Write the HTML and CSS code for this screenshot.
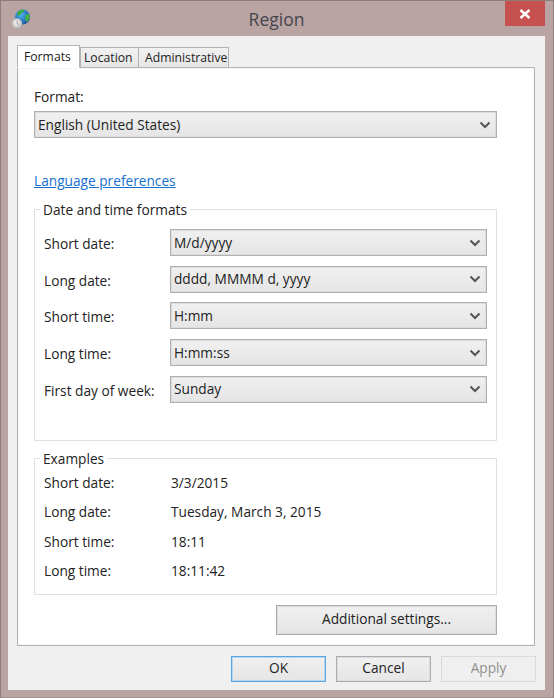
FILE: index.html
```html
<!DOCTYPE html>
<html lang="en">
<head>
  <meta charset="UTF-8">
  <title>Region</title>
  <link rel="stylesheet" href="styles.css">
</head>
<body>
  <div class="window">
    <div class="titlebar">
      <svg class="app-icon" width="20" height="20" viewBox="0 0 20 20">
        <defs>
          <radialGradient id="sea" cx="0.4" cy="0.35" r="0.75">
            <stop offset="0" stop-color="#4fb4ee"/>
            <stop offset="1" stop-color="#0f4a98"/>
          </radialGradient>
          <radialGradient id="disc" cx="0.45" cy="0.4" r="0.7">
            <stop offset="0" stop-color="#f6f6f6"/>
            <stop offset="1" stop-color="#b4b4b4"/>
          </radialGradient>
        </defs>
        <circle cx="11.5" cy="8" r="7.5" fill="url(#sea)"/>
        <path d="M8 2c1.500-1.200 3.500-1.500 5-1l-.5 2-2.500 1-.5 2-2 .5-1.500-1.500z" fill="#3fae3a"/>
        <path d="M14.500 6l3.500-1c1 2.500.5 4.500-.8 6.500l-2 1.500-.8-2.500z" fill="#46b23e"/>
        <circle cx="6" cy="14.500" r="5" fill="url(#disc)" stroke="#a8a8a8" stroke-width="0.5"/>
        <path d="M6 11.500v3l2 1" fill="none" stroke="#8a8a8a" stroke-width="0.8"/>
      </svg>
      <div class="title">Region</div>
      <div class="close">
        <svg width="12" height="10" viewBox="0 0 12 10">
          <path d="M1.500 1l9 8M10.500 1l-9 8" stroke="#fff" stroke-width="2.400" fill="none"/>
        </svg>
      </div>
    </div>

    <div class="client">
      <div class="tabs">
        <div class="tab active">Formats</div>
        <div class="tab tab-location">Location</div>
        <div class="tab tab-admin">Administrative</div>
      </div>

      <div class="pane">
        <label class="format-label">Format:</label>
        <div class="combo">
          <span>English (United States)</span>
          <svg class="chevron" width="12" height="8" viewBox="0 0 12 8"><path d="M1.500 1.500L6 6l4.500-4.500" fill="none" stroke="#555" stroke-width="2"/></svg>
        </div>

        <a class="link" href="#">Language preferences</a>

        <fieldset class="group formats-group">
          <legend>Date and time formats</legend>
          <div class="form-row">
            <label>Short date:</label>
            <div class="combo">
              <span>M/d/yyyy</span>
              <svg class="chevron" width="12" height="8" viewBox="0 0 12 8"><path d="M1.500 1.500L6 6l4.500-4.500" fill="none" stroke="#555" stroke-width="2"/></svg>
            </div>
          </div>
          <div class="form-row">
            <label>Long date:</label>
            <div class="combo">
              <span>dddd, MMMM d, yyyy</span>
              <svg class="chevron" width="12" height="8" viewBox="0 0 12 8"><path d="M1.500 1.500L6 6l4.500-4.500" fill="none" stroke="#555" stroke-width="2"/></svg>
            </div>
          </div>
          <div class="form-row">
            <label>Short time:</label>
            <div class="combo">
              <span>H:mm</span>
              <svg class="chevron" width="12" height="8" viewBox="0 0 12 8"><path d="M1.500 1.500L6 6l4.500-4.500" fill="none" stroke="#555" stroke-width="2"/></svg>
            </div>
          </div>
          <div class="form-row">
            <label>Long time:</label>
            <div class="combo">
              <span>H:mm:ss</span>
              <svg class="chevron" width="12" height="8" viewBox="0 0 12 8"><path d="M1.500 1.500L6 6l4.500-4.500" fill="none" stroke="#555" stroke-width="2"/></svg>
            </div>
          </div>
          <div class="form-row">
            <label>First day of week:</label>
            <div class="combo">
              <span>Sunday</span>
              <svg class="chevron" width="12" height="8" viewBox="0 0 12 8"><path d="M1.500 1.500L6 6l4.500-4.500" fill="none" stroke="#555" stroke-width="2"/></svg>
            </div>
          </div>
        </fieldset>

        <fieldset class="group examples-group">
          <legend>Examples</legend>
          <div class="example-row"><span>Short date:</span><span>3/3/2015</span></div>
          <div class="example-row"><span>Long date:</span><span>Tuesday, March 3, 2015</span></div>
          <div class="example-row"><span>Short time:</span><span>18:11</span></div>
          <div class="example-row"><span>Long time:</span><span>18:11:42</span></div>
        </fieldset>

        <div class="additional-row">
          <button class="btn additional-btn" type="button">Additional settings...</button>
        </div>
      </div>

      <div class="footer">
        <button class="btn default" type="button">OK</button>
        <button class="btn" type="button">Cancel</button>
        <button class="btn disabled" type="button">Apply</button>
      </div>
    </div>
  </div>
</body>
</html>
```

FILE: styles.css
```css
/* Base styles */
* {
  box-sizing: border-box;
}

body {
  margin: 0;
  font-family: "Open Sans", "Noto Sans", sans-serif;
  font-size: 13.7px;
  line-height: 20px;
  color: #222;
  background: #b9a4a3;
}

/* Window frame */
.window {
  width: 554px;
  height: 698px;
  padding: 0 8px 8px 7px;
  background: #b9a4a3;
  border: 1px solid #8e7c7c;
  border-bottom-color: #a08d8d;
  display: flex;
  flex-direction: column;
}

.titlebar {
  height: 35px;
  flex: none;
  display: grid;
  grid-template-columns: 1fr auto 1fr;
  align-items: start;
}

.app-icon {
  margin: 8px 0 0 3px;
}

.title {
  margin-top: 6px;
  font-size: 17.5px;
  line-height: 24px;
  color: #45454d;
}

.close {
  justify-self: end;
  width: 40px;
  height: 25px;
  background: #c75050;
  display: flex;
  align-items: center;
  justify-content: center;
}

.client {
  flex: 1;
  background: #f0f0f0;
  padding: 9px 10px 8px 9px;
  display: flex;
  flex-direction: column;
}

/* Tabs */
.tabs {
  display: flex;
  align-items: flex-end;
  height: 23px;
  margin-bottom: -1px;
  position: relative;
  z-index: 1;
}

.tab {
  height: 21px;
  padding: 0 0 0 6px;
  font-size: 12.2px;
  line-height: 19px;
  border: 1px solid #b4b4b4;
  background: linear-gradient(#f1f1f1, #e6e6e6);
  margin-left: -1px;
}

.tab.active {
  width: 63px;
  height: 23px;
  margin-left: 0;
  margin-right: 1px;
  line-height: 21px;
  background: #fff;
  border-bottom-color: #fff;
}

.tab-location {
  width: 59px;
  padding-left: 3px;
}

.tab-admin {
  width: 91px;
}

.pane {
  flex: 1;
  background: #fff;
  border: 1px solid #b4b4b4;
  box-shadow: inset 0 0 0 1px #f4f4f4;
  padding: 19px 37px 10px 16px;
  display: flex;
  flex-direction: column;
}

.format-label {
  display: block;
  margin-bottom: 4px;
}

/* Combo boxes */
.combo {
  height: 27px;
  flex: none;
  display: flex;
  align-items: center;
  justify-content: space-between;
  padding: 0 4px 0 3px;
  border: 1px solid #b0b0b0;
  box-shadow: inset 0 0 0 1px #dcdcdc;
  background: linear-gradient(#f0f0f0, #e5e5e5);
}

.chevron {
  flex: none;
  margin-right: 1px;
}

.link {
  display: block;
  margin-top: 33px;
  margin-bottom: 8px;
  color: #1570cf;
  text-decoration: underline;
}

/* Group boxes */
.group {
  margin: 0;
  border: 1px solid #e0e0e0;
  padding: 0 9px;
}

.group legend {
  margin-left: -4px;
  padding: 1px 3px 0;
  line-height: 20px;
}

.formats-group {
  padding-top: 9px;
  padding-bottom: 37px;
  display: flex;
  flex-direction: column;
  gap: 9.7px;
}

.form-row {
  display: grid;
  grid-template-columns: 126px 1fr;
  align-items: center;
}

.form-row label {
  padding-top: 3px;
}

.examples-group {
  margin-top: 7px;
  padding-top: 4px;
  padding-bottom: 12.5px;
  display: flex;
  flex-direction: column;
  gap: 9.5px;
}

.example-row {
  display: grid;
  grid-template-columns: 127px 1fr;
}

/* Buttons */
.btn {
  font: inherit;
  color: inherit;
  width: 95px;
  height: 26px;
  padding: 0 0 2px;
  border: 1px solid #acacac;
  box-shadow: inset 0 0 0 1px #dcdcdc;
  background: linear-gradient(#f0f0f0, #e5e5e5);
}

.additional-row {
  margin-top: 10px;
  display: flex;
  justify-content: flex-end;
}

.additional-btn {
  width: 221px;
  height: 30px;
}

.footer {
  margin-top: 10px;
  margin-right: -1px;
  display: flex;
  justify-content: flex-end;
  gap: 10px;
}

.btn.default {
  border-color: #5aa5e0;
  box-shadow: inset 0 0 0 1px #b5d7f2;
}

.btn.disabled {
  color: #8f8f8f;
  border-color: #d9d9d9;
  box-shadow: none;
  background: #efefef;
}
```
